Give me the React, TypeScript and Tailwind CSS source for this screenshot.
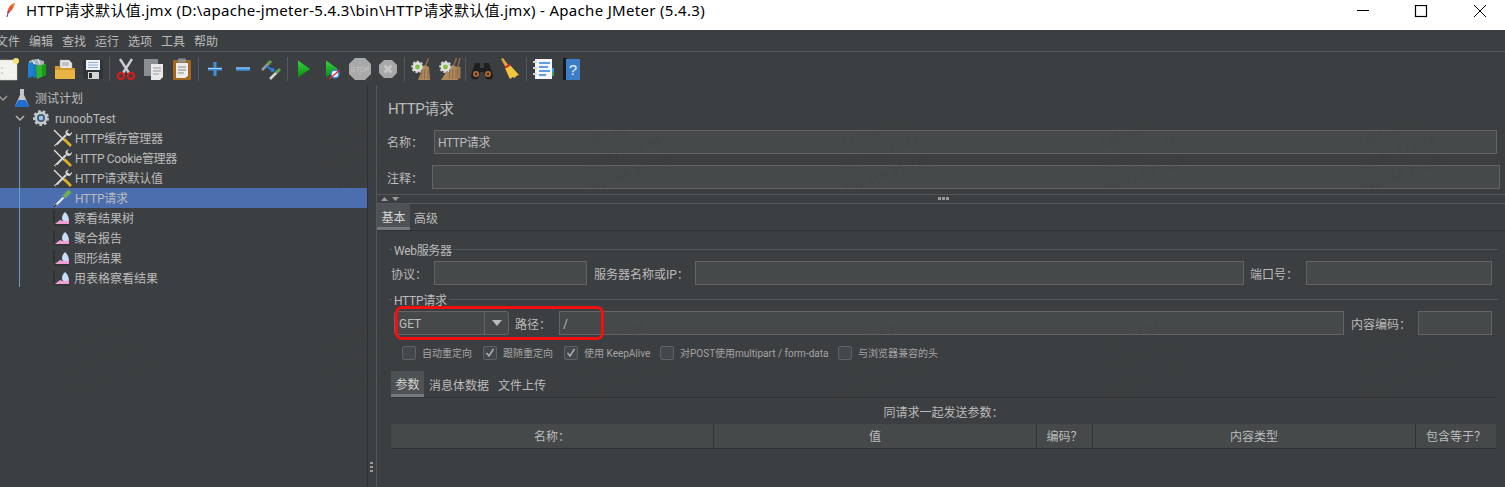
const inputCls = 'h-6 shrink-0 border border-[#646464] bg-[#45494a]';

const Feather = () => (
  <svg width="11" height="16" viewBox="0 0 14 20">
    <path d="M12.500 1C8 2 4.500 6 3.500 11L3 14l3-1.500C9.500 10 12 5.500 12.500 1z" fill="#e8562a" />
    <path d="M12.500 1C10.500 3 9.500 4 9 6l2-.5c.8-1.500 1.300-3 1.500-4.500z" fill="#f4a63a" />
    <path d="M3.500 11l3 1.500L3 14z" fill="#9b2fae" />
    <path d="M4.500 12L2.500 19" stroke="#7a1f6a" strokeWidth="1.200" fill="none" />
  </svg>
);

const NewIcon = () => (
  <svg width="24" height="24" viewBox="0 0 24 24">
    <rect x="2" y="3" width="18" height="20" fill="#f2f2ee" stroke="#c8c8c4" strokeWidth="0.500" />
    <circle cx="5" cy="11" r="0.800" fill="#aaa" />
    <circle cx="5" cy="16" r="0.800" fill="#aaa" />
    <circle cx="19" cy="4" r="3" fill="#f6e27a" />
  </svg>
);

const TemplatesIcon = () => (
  <svg width="24" height="24" viewBox="0 0 24 24">
    <path d="M4 4l7-2 8 2v5H4z" fill="#a9b0b5" />
    <path d="M3 6l5-1v14l-4 2-1-1z" fill="#1f7fd0" />
    <path d="M8 7l5 1v12l-5 1z" fill="#157ab8" />
    <path d="M11 9l10-2v11l-9 4z" fill="#2fb52a" />
    <path d="M17 8l4-1v11l-4 2z" fill="#179a1c" />
    <path d="M7 3l3 4M13 2l2 5" stroke="#d6dadd" strokeWidth="1.500" />
  </svg>
);

const OpenIcon = () => (
  <svg width="24" height="24" viewBox="0 0 24 24">
    <path d="M7 3h9l3 3v8H7z" fill="#e8e8e8" stroke="#999" strokeWidth="0.500" />
    <path d="M9 6h7M9 8h7" stroke="#888" strokeWidth="0.800" />
    <path d="M2 9h4l2 2h14v10a1 1 0 0 1-1 1H3a1 1 0 0 1-1-1z" fill="#d9992a" />
    <path d="M2 13h20v8a1 1 0 0 1-1 1H3a1 1 0 0 1-1-1z" fill="#eab445" />
  </svg>
);

const SaveIcon = () => (
  <svg width="24" height="24" viewBox="0 0 24 24">
    <path d="M2 3h19l1 1v18H4l-2-2z" fill="#303338" />
    <rect x="5" y="3" width="14" height="10" fill="#f0f2f6" />
    <path d="M7 5.500h10M7 8h10M7 10.500h10" stroke="#7ea6d8" strokeWidth="0.900" />
    <rect x="7" y="15" width="11" height="7" fill="#d4d4d4" />
    <rect x="8" y="16" width="3" height="5" fill="#2b2b2b" />
  </svg>
);

const CutIcon = () => (
  <svg width="24" height="24" viewBox="0 0 24 24" fill="none">
    <path d="M6 2l9 14M18 2L9 16" stroke="#c9ced2" strokeWidth="2.400" />
    <circle cx="7" cy="19" r="3.200" stroke="#d21d1d" strokeWidth="2.200" />
    <circle cx="17" cy="19" r="3.200" stroke="#d21d1d" strokeWidth="2.200" />
  </svg>
);

const CopyIcon = () => (
  <svg width="24" height="24" viewBox="0 0 24 24">
    <rect x="2" y="2" width="14" height="17" fill="#8b8f92" />
    <path d="M9 7h12v13l-3 3H9z" fill="#e9e9e9" />
    <path d="M11 11h8M11 14h8M11 17h6" stroke="#999" strokeWidth="1" />
  </svg>
);

const PasteIcon = () => (
  <svg width="24" height="24" viewBox="0 0 24 24">
    <rect x="3" y="3" width="18" height="20" rx="1" fill="#a5661f" />
    <path d="M6 6h12v13l-3 2H6z" fill="#ececec" />
    <path d="M8 10h8M8 13h8M8 16h6" stroke="#888" strokeWidth="1" />
    <rect x="8" y="1.500" width="8" height="4" rx="1" fill="#8d9194" />
  </svg>
);

const PlusIcon = () => (
  <svg width="24" height="24" viewBox="0 0 24 24">
    <path d="M12 5v14M5 12h14" stroke="#3f8fdc" strokeWidth="3" />
    <path d="M5 11.500h14" stroke="#a9d0f4" strokeWidth="1" />
  </svg>
);

const MinusIcon = () => (
  <svg width="24" height="24" viewBox="0 0 24 24">
    <path d="M5 12h14" stroke="#3f8fdc" strokeWidth="3.500" />
    <path d="M5 11h14" stroke="#a9d0f4" strokeWidth="1" />
  </svg>
);

const ToggleIcon = () => (
  <svg width="24" height="24" viewBox="0 0 24 24" fill="none">
    <path d="M3 13l7-7" stroke="#9a9a9a" strokeWidth="2.500" />
    <path d="M9 7l3-3" stroke="#5ea84a" strokeWidth="3" />
    <path d="M11 22l7-7" stroke="#d6d6d6" strokeWidth="2.500" />
    <path d="M17 16l4-4" stroke="#5ea84a" strokeWidth="3" />
    <path d="M7 9l8 5M15 14l-3 0M15 14l-1-3" stroke="#2c86e0" strokeWidth="1.500" />
  </svg>
);

const PlayIcon = () => (
  <svg width="24" height="24" viewBox="0 0 24 24">
    <defs>
      <linearGradient id="pl" x1="0" y1="0" x2="0" y2="1">
        <stop offset="0" stopColor="#35d43a" />
        <stop offset="1" stopColor="#0a8a12" />
      </linearGradient>
    </defs>
    <path d="M6 3.500l12 8.500-12 8.500z" fill="url(#pl)" />
  </svg>
);

const PlayNoTimerIcon = () => (
  <svg width="24" height="24" viewBox="0 0 24 24">
    <path d="M6 3.500l12 8.500-12 8.500z" fill="url(#pl)" />
    <circle cx="15" cy="17" r="4" fill="#e9f1fb" stroke="#2e7fd6" strokeWidth="1.500" />
    <path d="M9 22l11-9" stroke="#e02828" strokeWidth="1.300" />
  </svg>
);

const StopIcon = () => (
  <svg width="24" height="24" viewBox="0 0 24 24">
    <path d="M7 1h10l6 6v10l-6 6H7l-6-6V7z" fill="#a9a9a9" />
    <text x="12" y="15" textAnchor="middle" fontSize="7" fontWeight="700" fill="#bdbdbd" fontFamily="Liberation Sans, sans-serif">STOP</text>
  </svg>
);

const ShutdownIcon = () => (
  <svg width="24" height="24" viewBox="0 0 24 24">
    <path d="M8 3h8l5 5v8l-5 5H8l-5-5V8z" fill="#a9a9a9" />
    <path d="M8.500 8.500l7 7M15.500 8.500l-7 7" stroke="#c8c8c8" strokeWidth="2.500" />
  </svg>
);

const ClearIcon = ({ all }: { all?: boolean }) => (
  <svg width="24" height="24" viewBox="0 0 24 24">
    <circle cx="8.500" cy="10" r="5" fill="#e4e4e4" stroke="#d2d2d2" strokeWidth="2.500" strokeDasharray="2.200 1.500" />
    <circle cx="8.500" cy="10" r="2.400" fill="#7cc23a" />
    {all && <path d="M4 23l6-9 4 3-2 6z" fill="#b08a5e" />}
    <path d="M19.500 1l-3 8" stroke="#8a6a4a" strokeWidth="1.600" />
    <path d="M15 8l5 2 1 13H9z" fill="#b08a5e" />
    <path d="M13 13l-1 9M16 12l-.5 10M19 12l0 10" stroke="#7c5b3a" strokeWidth="0.700" />
    {all && <path d="M23 1l-2 8" stroke="#8a6a4a" strokeWidth="1.600" />}
    {all && <path d="M20 9l3.500 1V21l-2.500 1z" fill="#a07a50" />}
  </svg>
);

const BinocularsIcon = () => (
  <svg width="24" height="24" viewBox="0 0 24 24">
    <path d="M5 6h5v5h4V6h5l4 12a4 4 0 0 1-8 1l-1-4h-4l-1 4a4 4 0 0 1-8-1z" fill="#1f1f1f" />
    <circle cx="6" cy="17" r="3" fill="#b06a34" />
    <circle cx="18" cy="17" r="3" fill="#b06a34" />
    <circle cx="6" cy="17" r="1.200" fill="#3a2a1c" />
    <circle cx="18" cy="17" r="1.200" fill="#3a2a1c" />
  </svg>
);

const BroomIcon = () => (
  <svg width="24" height="24" viewBox="0 0 24 24">
    <path d="M3 2l2-1 6 8-3 2z" fill="#e0a43a" />
    <path d="M7 11l5-3 9 10-3 1-1 2-2-1-3 2-2-4z" fill="#f2c63c" />
    <path d="M6.500 10l5-3.500 1.200 1.700-5 3.300z" fill="#d3242b" />
  </svg>
);

const ListIcon = () => (
  <svg width="24" height="24" viewBox="0 0 24 24">
    <rect x="4" y="2" width="17" height="20" fill="#f5f6f8" />
    <rect x="21" y="11" width="2" height="4" fill="#2ea0d8" />
    <rect x="21" y="15" width="2" height="4" fill="#37a64a" />
    <path d="M2 5h4M2 11h4M2 17h4" stroke="#d8d8d8" strokeWidth="2" />
    <path d="M8 6h11M8 10h9M8 14h11M8 18h7" stroke="#2c7fe0" strokeWidth="1.300" />
  </svg>
);

const HelpIcon = () => (
  <svg width="24" height="24" viewBox="0 0 24 24">
    <rect x="4" y="1" width="4" height="22" fill="#15181c" />
    <rect x="7" y="2" width="14" height="21" fill="#3d7ec6" />
    <text x="14" y="18" textAnchor="middle" fontSize="15" fill="#e8f0fa" fontFamily="Liberation Sans, sans-serif">?</text>
  </svg>
);

const Flask = () => (
  <svg width="14" height="20" viewBox="0 0 14 20">
    <path d="M5 1h4v6l4.500 10a1.500 1.500 0 0 1-1.500 2H2a1.500 1.500 0 0 1-1.500-2L5 7z" fill="#c4c8cc" />
    <path d="M3.500 12h7l3 5a1.500 1.500 0 0 1-1.500 2H2a1.500 1.500 0 0 1-1.500-2z" fill="#1e6fd0" />
  </svg>
);

const Gear = () => (
  <svg width="18" height="18" viewBox="0 0 18 18">
    <circle cx="9" cy="9" r="6.500" fill="#c6c8ca" stroke="#c6c8ca" strokeWidth="3" strokeDasharray="2.500 2" />
    <circle cx="9" cy="9" r="4" fill="#3c5f86" />
    <circle cx="9" cy="9" r="2.200" fill="#a9c4e4" />
  </svg>
);

const Wrench = () => (
  <svg width="20" height="20" viewBox="0 0 20 20" fill="none">
    <path d="M1 2l11 11" stroke="#e6e6e6" strokeWidth="1.200" />
    <path d="M11 11l7 7" stroke="#e2b020" strokeWidth="2.600" />
    <path d="M1.500 18.500L13 7" stroke="#d8d8d8" strokeWidth="2" />
    <path d="M13 6.500a3.500 3.500 0 0 1 1-4.500l2-.5-2 2.500 2.500 2 2.500-2a3.500 3.500 0 0 1-5 3.500z" fill="#d8d8d8" />
    <path d="M1 19l3-2" stroke="#222" strokeWidth="1" />
  </svg>
);

const Pipette = () => (
  <svg width="20" height="20" viewBox="0 0 20 20" fill="none">
    <path d="M1.500 18.500l9-9" stroke="#e6e6e6" strokeWidth="2.200" />
    <path d="M1 19l2.500-2.500" stroke="#222" strokeWidth="1.500" />
    <path d="M11 9l6-6" stroke="#6fae55" strokeWidth="4" />
  </svg>
);

const Graph = () => (
  <svg width="17" height="18" viewBox="0 0 17 18" fill="none">
    <path d="M1 1v15h15M0 4h2M0 8h2M0 12h2" stroke="#2a2a2a" strokeWidth="1" />
    <path d="M2 15l5-4 3 1 6-3v6z" fill="#ef9fd6" />
    <path d="M12 3c2 2 3.500 4 3.500 6a3.200 3.200 0 0 1-6.500 0c0-2 1-4 3-6z" fill="#c6def8" />
  </svg>
);

const Chevron = ({ dim }: { dim?: boolean }) => (
  <svg width="10" height="8" viewBox="0 0 10 8" fill="none">
    <path d="M1 2l4 4 4-4" stroke={dim ? '#9a9a9a' : '#b5b5b5'} strokeWidth="1.500" />
  </svg>
);

function Sep() {
  return <div className="mx-[2px] h-6 w-px bg-[#55585a]" />;
}

function ToolBtn({ children }: { children: React.ReactNode }) {
  return <div className="flex w-[28px] shrink-0 items-center justify-center">{children}</div>;
}

function TreeRow({
  indent,
  icon,
  label,
  selected,
  gap = 'ml-[2px] tracking-[-0.3px]',
}: {
  indent: string;
  icon: React.ReactNode;
  label: string;
  selected?: boolean;
  gap?: string;
}) {
  return (
    <div className={`flex h-5 items-center ${indent} ${selected ? 'bg-[#4b6eaf]' : ''}`}>
      {icon}
      <span className={`${gap} pt-[2px]`}>{label}</span>
    </div>
  );
}

function Fieldset({ label }: { label: string }) {
  return (
    <div className="flex h-[14px] items-center gap-[2px]">
      <div className="h-px w-[3px] bg-[#555859]" />
      <span className="pt-[4px] leading-[14px] tracking-[-0.3px]">{label}</span>
      <div className="h-px flex-1 bg-[#555859]" />
    </div>
  );
}

function Check({ label, checked, width }: { label: string; checked?: boolean; width: string }) {
  return (
    <div className={`flex shrink-0 items-center ${width}`}>
      <div className="flex h-[14px] w-[14px] items-center justify-center rounded-[2px] border border-[#606366] bg-[#43494a]">
        {checked && (
          <svg width="10" height="10" viewBox="0 0 10 10" fill="none">
            <path d="M1.500 5l2.500 3 4.500-7" stroke="#a9b0b5" strokeWidth="1.500" />
          </svg>
        )}
      </div>
      <span className="ml-[6px] pt-[2px] text-[10px] whitespace-nowrap text-[#a4a4a4]">{label}</span>
    </div>
  );
}

export default function App() {
  const marks = Array.from({ length: 12 });
  return (
    <div className="relative h-[487px] w-[1505px] overflow-hidden bg-[#3c3f41] font-['Roboto','Noto_Sans_CJK_SC',sans-serif] text-xs text-[#bbbbbb]">
      <div className="flex h-[30px] items-center bg-white text-black">
        <div className="mb-[10px] ml-[5px] w-[21px]">
          <Feather />
        </div>
        <span className="mb-[10px] font-['Noto_Sans','Noto_Sans_CJK_SC',sans-serif] text-[15px] tracking-[0.32px] whitespace-nowrap">HTTP请求默认值.jmx (D:\apache-jmeter-5.4.3\bin\HTTP请求默认值.jmx) - Apache JMeter (5.4.3)</span>
        <div className="ml-auto flex items-center">
          <svg width="150" height="20" viewBox="0 0 150 20" fill="none" stroke="#000">
            <path d="M2 5.500h12" />
            <rect x="60.500" y="0.500" width="11" height="11" strokeWidth="1.200" />
            <path d="M119 0l12 12M131 0l-12 12" />
          </svg>
        </div>
      </div>

      <div className="-ml-[4px] flex h-[22px] items-center gap-[9px] border-b border-[#55585a] pt-[2px]">
        {['文件', '编辑', '查找', '运行', '选项', '工具', '帮助'].map((m) => (
          <span key={m}>{m}</span>
        ))}
      </div>

      <div className="-ml-[5px] flex h-[33px] items-center">
        <ToolBtn><NewIcon /></ToolBtn>
        <ToolBtn><TemplatesIcon /></ToolBtn>
        <ToolBtn><OpenIcon /></ToolBtn>
        <ToolBtn><SaveIcon /></ToolBtn>
        <Sep />
        <ToolBtn><CutIcon /></ToolBtn>
        <ToolBtn><CopyIcon /></ToolBtn>
        <ToolBtn><PasteIcon /></ToolBtn>
        <Sep />
        <ToolBtn><PlusIcon /></ToolBtn>
        <ToolBtn><MinusIcon /></ToolBtn>
        <ToolBtn><ToggleIcon /></ToolBtn>
        <Sep />
        <ToolBtn><PlayIcon /></ToolBtn>
        <ToolBtn><PlayNoTimerIcon /></ToolBtn>
        <ToolBtn><StopIcon /></ToolBtn>
        <ToolBtn><ShutdownIcon /></ToolBtn>
        <Sep />
        <ToolBtn><ClearIcon /></ToolBtn>
        <ToolBtn><ClearIcon all /></ToolBtn>
        <Sep />
        <ToolBtn><BinocularsIcon /></ToolBtn>
        <ToolBtn><BroomIcon /></ToolBtn>
        <Sep />
        <ToolBtn><ListIcon /></ToolBtn>
        <ToolBtn><HelpIcon /></ToolBtn>
      </div>

      <div className="flex h-[402px]">
        {/* tree */}
        <div className="w-[368px] shrink-0 border-r border-[#2f3133] pt-[3px]">
          <TreeRow indent="pl-0" icon={<div className="flex items-center"><div className="-ml-[2px] w-[17px]"><Chevron dim /></div><Flask /></div>} label="测试计划" gap="ml-[6px]" />
          <TreeRow indent="pl-[15px]" icon={<div className="flex items-center"><div className="w-[17px]"><Chevron /></div><Gear /></div>} label="runoobTest" gap="ml-[5px]" />
          <div className="relative">
            <div className="absolute top-[-1px] left-[19px] h-[160px] w-px bg-[#6d9bc4]" />
            <TreeRow indent="pl-[53px]" icon={<Wrench />} label="HTTP缓存管理器" />
            <TreeRow indent="pl-[53px]" icon={<Wrench />} label="HTTP Cookie管理器" />
            <TreeRow indent="pl-[53px]" icon={<Wrench />} label="HTTP请求默认值" />
            <TreeRow indent="pl-[53px]" icon={<Pipette />} label="HTTP请求" selected />
            <TreeRow indent="pl-[53px]" icon={<Graph />} label="察看结果树" gap="ml-[4px]" />
            <TreeRow indent="pl-[53px]" icon={<Graph />} label="聚合报告" gap="ml-[4px]" />
            <TreeRow indent="pl-[53px]" icon={<Graph />} label="图形结果" gap="ml-[4px]" />
            <TreeRow indent="pl-[53px]" icon={<Graph />} label="用表格察看结果" gap="ml-[4px]" />
          </div>
        </div>

        {/* split bar */}
        <div className="flex w-[9px] shrink-0 flex-col items-center justify-end gap-[2px] border-r border-[#55585a] pr-px pb-[15px]">
          <div className="h-[2px] w-[3px] bg-[#9a9a9a]" />
          <div className="h-[2px] w-[3px] bg-[#9a9a9a]" />
          <div className="h-[2px] w-[3px] bg-[#9a9a9a]" />
        </div>

        {/* detail panel */}
        <div className="min-w-0 flex-1">
          <div className="h-[45px] pt-[14px] pl-[11px] text-[15px] leading-5 tracking-[-0.4px]">HTTP请求</div>
          <div className="flex items-center pr-[8px] pl-[10px]">
            <span className="w-[47px] shrink-0 pt-[2px]">名称：</span>
            <div className="h-6 flex-1 border border-[#646464] bg-[#45494a] pl-[3px] leading-[24px] tracking-[-0.4px]">HTTP请求</div>
          </div>
          <div className="mt-[11px] flex items-center pr-[5px] pl-[10px]">
            <span className="w-[45px] shrink-0 pt-[4px]">注释：</span>
            <div className="h-6 flex-1 border border-[#646464] bg-[#45494a]" />
          </div>

          <div className="relative mt-[5px] h-[10px] border-y border-[#55585a]">
            <svg width="22" height="7" viewBox="0 0 22 7" className="mt-px ml-[4px]" fill="#9a9a9a">
              <path d="M0 5l3.500-4L7 5zM11 1h7l-3.500 4z" />
            </svg>
            <div className="absolute top-[2px] left-[561px] flex gap-px">
              <div className="h-[3px] w-[3px] bg-[#9a9a9a]" />
              <div className="h-[3px] w-[3px] bg-[#9a9a9a]" />
              <div className="h-[3px] w-[3px] bg-[#9a9a9a]" />
            </div>
          </div>

          <div className="flex h-[27px] items-end border-b border-[#303234]">
            <div className="flex h-[26px] w-[33px] items-center justify-center border-b-[3px] border-[#74797b] bg-[#4e5254] pt-[4px] text-[#d5d5d5]">基本</div>
            <span className="ml-[4px] h-[24px] leading-[26px]">高级</span>
          </div>

          <div className="mt-[11px] mr-[7px] ml-[12px]">
            <Fieldset label="Web服务器" />
            <div className="mt-[5px] mr-[6px] flex items-center pl-[2px]">
              <span className="w-[43px] shrink-0 pt-[4px]">协议：</span>
              <div className={`${inputCls} w-[153px]`} />
              <span className="w-[108px] shrink-0 pt-[4px] pl-[7px] whitespace-nowrap">服务器名称或IP：</span>
              <div className={`${inputCls} w-[549px]`} />
              <span className="w-[62px] shrink-0 pt-[4px] pl-[6px]">端口号：</span>
              <div className={`${inputCls} flex-1`} />
            </div>
          </div>

          <div className="mt-[7px] mr-[7px] ml-[12px]">
            <Fieldset label="HTTP请求" />
            <div className="mt-[5px] mr-[6px] flex items-center pl-[5px]">
              <div className="flex h-6 w-[115px] shrink-0 rounded-[3px] border border-[#646464] bg-[#45494a]">
                <span className="flex-1 pl-[4px] leading-[24px]">GET</span>
                <div className="flex w-[24px] items-center justify-center border-l border-[#646464]">
                  <svg width="10" height="6" viewBox="0 0 10 6" fill="#bbbbbb"><path d="M0 0h10L5 6z" /></svg>
                </div>
              </div>
              <span className="w-[50px] shrink-0 pt-[4px] pl-[6px]">路径：</span>
              <div className="h-6 flex-1 border border-[#646464] bg-[#45494a] pl-[3px] leading-[24px]">/</div>
              <span className="w-[74px] shrink-0 pt-[4px] pl-[7px]">内容编码：</span>
              <div className={`${inputCls} w-[74px]`} />
            </div>
          </div>

          <div className="mt-[11px] ml-[25px] flex h-[14px] items-center">
            <Check label="自动重定向" width="w-[81px]" />
            <Check label="跟随重定向" checked width="w-[81px]" />
            <Check label="使用 KeepAlive" checked width="w-[96px]" />
            <Check label="对POST使用multipart / form-data" width="w-[178px]" />
            <Check label="与浏览器兼容的头" width="w-[100px]" />
          </div>

          <div className="mt-[12px] mr-[9px] ml-[14px]">
            <div className="flex h-[26px] items-end border-b border-[#303234]">
              <div className="flex h-[26px] w-[33px] items-center justify-center border-b-[3px] border-[#74797b] bg-[#4e5254] pt-[4px] text-[#d5d5d5]">参数</div>
              <span className="ml-[5px] h-[24px] leading-[26px]">消息体数据</span>
              <span className="ml-[9px] h-[24px] leading-[26px]">文件上传</span>
            </div>
            <div className="flex h-[26px] items-center justify-center pt-[4px]">同请求一起发送参数：</div>
            <div className="flex h-[25px] border-b border-[#303234] bg-[#45494a] leading-[27px]">
              <div className="w-[323px] border-r border-[#303234] text-center">名称：</div>
              <div className="w-[323px] border-r border-[#303234] text-center">值</div>
              <div className="w-[56px] border-r border-[#303234] text-center">编码？</div>
              <div className="w-[323px] border-r border-[#303234] text-center">内容类型</div>
              <div className="flex-1 text-center">包含等于？</div>
            </div>
          </div>
        </div>
      </div>

      {/* red annotation drawn over the screenshot */}
      <div className="absolute top-[306px] left-[395px] h-[34px] w-[209px] rounded-[7px] border-[3px] border-[#f01010]" />

      {/* faint watermark */}
      <div className="pointer-events-none absolute top-[117px] left-[69px] grid auto-rows-[205px] grid-cols-[repeat(6,258px)] text-[13px] leading-[22px] text-[#000000]/[0.06]">
        {marks.map((_, i) => (
          <div key={i} className="w-[120px] -rotate-[20deg] text-center whitespace-nowrap">
            <div>1241 04-24</div>
            <div>101.87.172.44</div>
            <div>192.168.31.226</div>
          </div>
        ))}
      </div>
    </div>
  );
}
